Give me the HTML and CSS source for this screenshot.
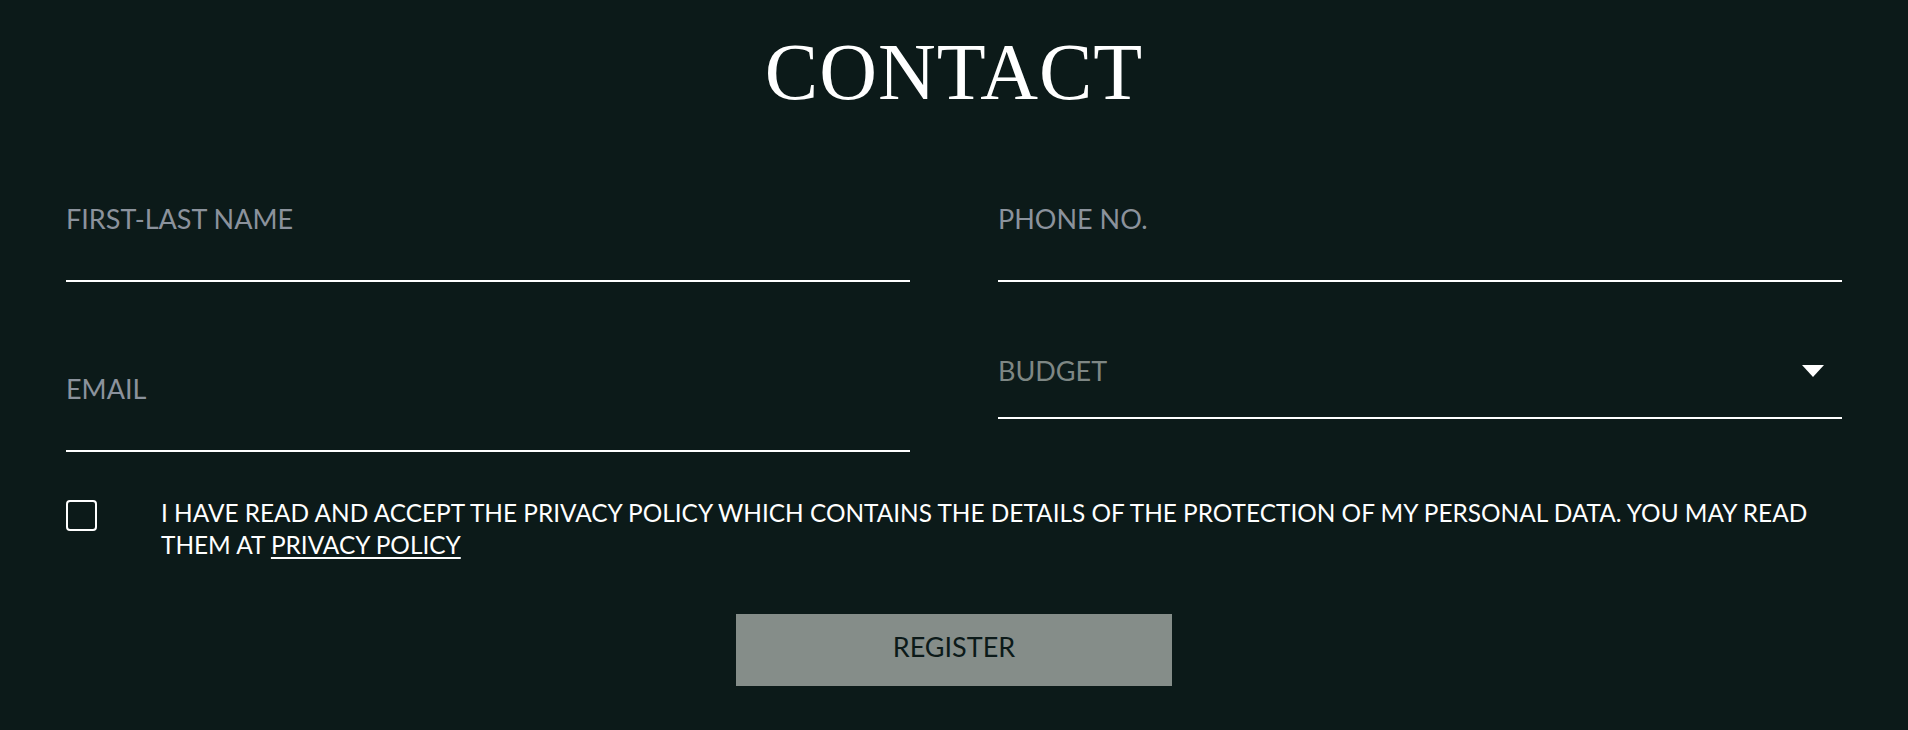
FILE: index.html
```html
<!DOCTYPE html>
<html lang="en">
<head>
<meta charset="utf-8">
<title>Contact</title>
<link rel="stylesheet" href="styles.css">
</head>
<body>
<section class="contact">
  <h1 class="title">CONTACT</h1>
  <form class="form">
    <div class="grid">
      <label class="field">
        <span class="label">FIRST-LAST NAME</span>
      </label>
      <label class="field">
        <span class="label">PHONE NO.</span>
      </label>
      <label class="field">
        <span class="label">EMAIL</span>
      </label>
      <div class="field select">
        <span class="label budget">BUDGET</span>
        <svg class="caret" width="22" height="12" viewBox="0 0 22 12"><path d="M0 0 H22 L11 12 Z" fill="#fff"/></svg>
      </div>
    </div>
    <div class="consent">
      <span class="box"></span>
      <p class="consent-text">I HAVE READ AND ACCEPT THE PRIVACY POLICY WHICH CONTAINS THE DETAILS OF THE PROTECTION OF MY PERSONAL DATA. YOU MAY READ THEM AT <a href="#" class="link">PRIVACY POLICY</a></p>
    </div>
    <div class="actions">
      <button type="button" class="btn">REGISTER</button>
    </div>
  </form>
</section>
</body>
</html>
```

FILE: styles.css
```css
html, body {
  margin: 0;
  padding: 0;
  background: #0c1a19;
}
body {
  width: 1908px;
  height: 730px;
  overflow: hidden;
  font-family: Lato, "Open Sans", sans-serif;
  color: #fff;
}
.contact {
  padding: 28px 66px 0;
}
.title {
  margin: 0;
  text-align: center;
  font-family: "Liberation Serif", serif;
  font-weight: 400;
  font-size: 80px;
  line-height: 88px;
  letter-spacing: 1px;
  color: #fff;
}
.form {
  margin-top: 69px;
}
.grid {
  display: grid;
  grid-template-columns: 1fr 1fr;
  column-gap: 88px;
  row-gap: 73px;
  align-items: start;
}
.field {
  display: flex;
  align-items: center;
  justify-content: space-between;
  padding-top: 18px;
  padding-bottom: 45px;
  border-bottom: 2px solid #fff;
}
.field.select {
  padding-top: 0;
  padding-bottom: 30px;
}
.label {
  font-size: 27px;
  line-height: 32px;
  color: #8b929c;
}
.label.budget {
  color: #7e8784;
}
.caret {
  margin-right: 18px;
  display: block;
}
.consent {
  display: flex;
  align-items: flex-start;
  gap: 64px;
  margin-top: 45px;
}
.box {
  flex: none;
  width: 27px;
  height: 27px;
  margin-top: 3px;
  border: 2px solid #fff;
  border-radius: 4px;
}
.consent-text {
  margin: 0;
  font-size: 24.4px;
  line-height: 32px;
  color: #fff;
}
.link {
  color: #fff;
  text-decoration: underline;
  text-underline-offset: 3px;
}
.actions {
  display: flex;
  justify-content: center;
  margin-top: 53px;
}
.btn {
  width: 436px;
  height: 72px;
  padding: 0 0 6px;
  border: 0;
  background: #858d89;
  color: #0c1a19;
  font-family: Lato, sans-serif;
  font-size: 27px;
  line-height: 32px;
}
```
